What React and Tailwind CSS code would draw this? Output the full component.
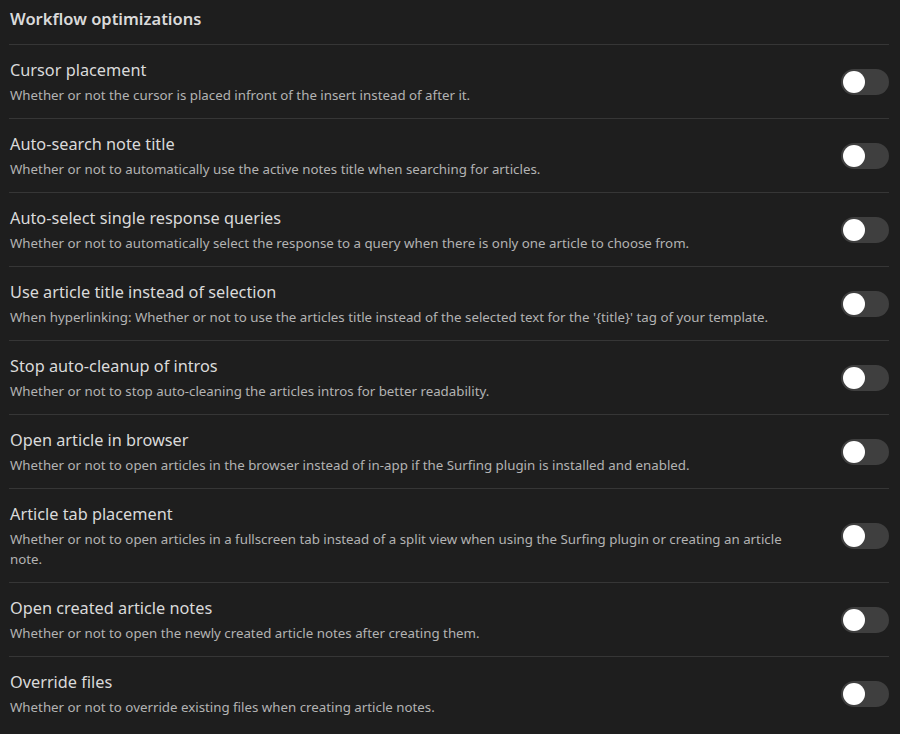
const settings = [
  {
    name: 'Cursor placement',
    desc: 'Whether or not the cursor is placed infront of the insert instead of after it.',
  },
  {
    name: 'Auto-search note title',
    desc: 'Whether or not to automatically use the active notes title when searching for articles.',
  },
  {
    name: 'Auto-select single response queries',
    desc: 'Whether or not to automatically select the response to a query when there is only one article to choose from.',
  },
  {
    name: 'Use article title instead of selection',
    desc: "When hyperlinking: Whether or not to use the articles title instead of the selected text for the '{title}' tag of your template.",
  },
  {
    name: 'Stop auto-cleanup of intros',
    desc: 'Whether or not to stop auto-cleaning the articles intros for better readability.',
  },
  {
    name: 'Open article in browser',
    desc: 'Whether or not to open articles in the browser instead of in-app if the Surfing plugin is installed and enabled.',
  },
  {
    name: 'Article tab placement',
    desc: 'Whether or not to open articles in a fullscreen tab instead of a split view when using the Surfing plugin or creating an article note.',
  },
  {
    name: 'Open created article notes',
    desc: 'Whether or not to open the newly created article notes after creating them.',
  },
  {
    name: 'Override files',
    desc: 'Whether or not to override existing files when creating article notes.',
  },
]

const Toggle = () => (
  <div className="shrink-0 w-[48px] h-[26px] rounded-full bg-[#3f3f3f] p-[2px] flex items-center">
    <div className="w-[22px] h-[22px] rounded-full bg-white" />
  </div>
)

const App = () => {
  return (
    <div
      className="min-h-[734px] bg-[#1e1e1e] pl-[9px] pr-[11px]"
      style={{ fontFamily: '"Noto Sans", "Open Sans", sans-serif' }}
    >
      <div className="h-[45px] pt-[7px] border-b border-[#363636]">
        <h2 className="pl-px text-[16.5px] leading-[24px] font-semibold text-[#dadada]">
          Workflow optimizations
        </h2>
      </div>

      {settings.map((s) => (
        <div
          key={s.name}
          className="flex items-center gap-[36px] border-b border-[#363636] last:border-b-0 py-[13px]"
        >
          <div className="flex-1 pl-px">
            <div className="text-[16.3px] leading-[24px] text-[#dadada]">{s.name}</div>
            <div className="mt-[3px] text-[13.3px] leading-[20px] text-[#b3b3b3]">{s.desc}</div>
          </div>
          <Toggle />
        </div>
      ))}
    </div>
  )
}

export default App
